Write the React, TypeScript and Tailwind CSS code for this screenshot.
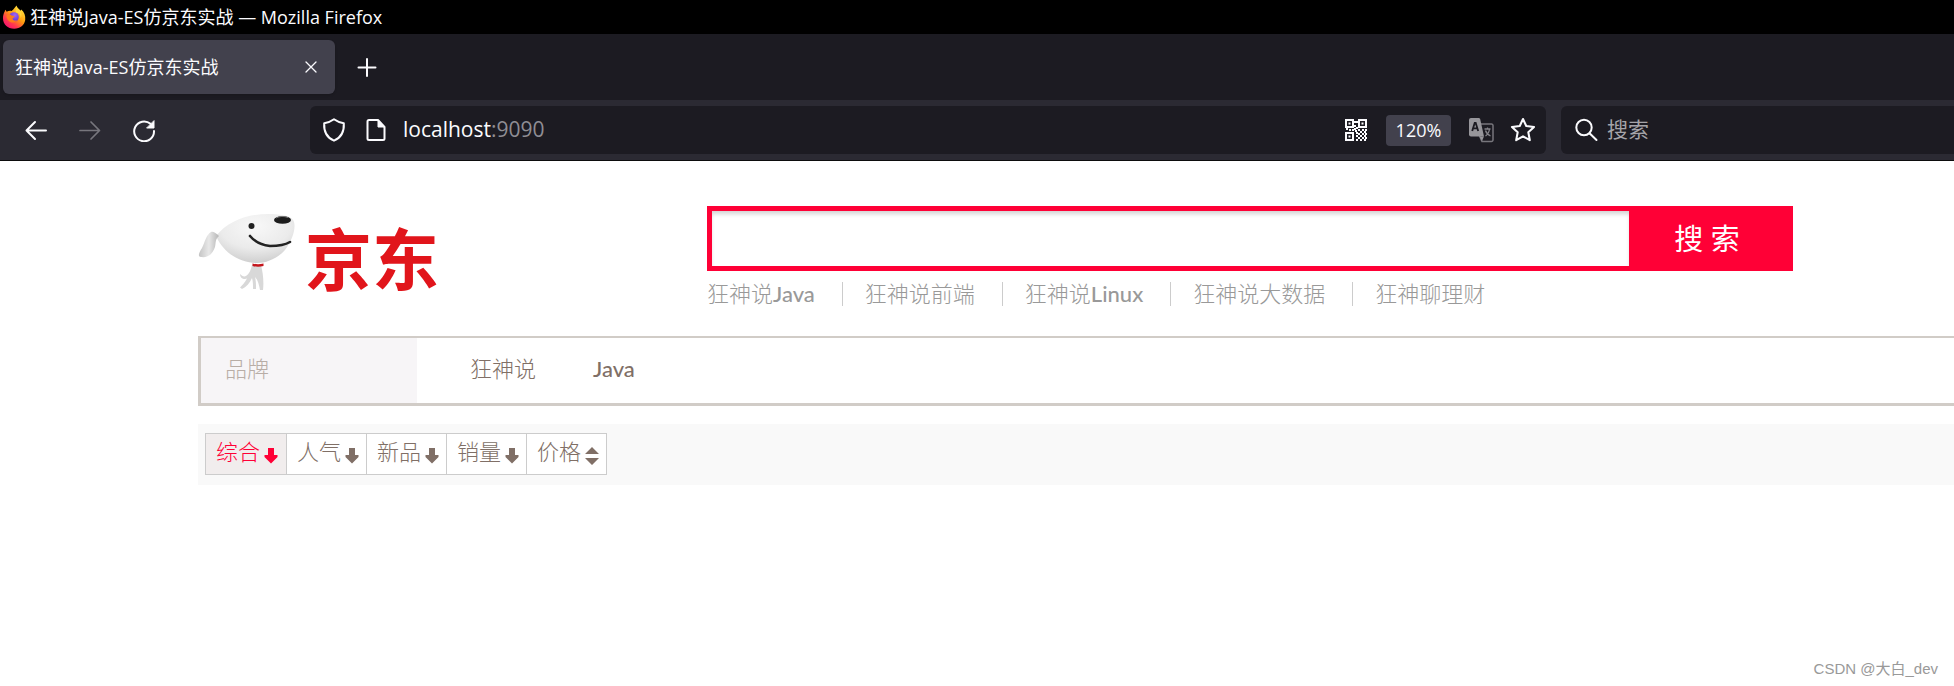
import type { ReactNode } from "react";

const pageLatin = "font-['Lato','Noto_Sans_CJK_SC',sans-serif]";

function FirefoxLogo() {
  return (
    <svg viewBox="0 0 24 24" className="size-6 shrink-0" aria-hidden="true">
      <defs>
        <linearGradient id="flame" x1="0.85" y1="0.1" x2="0.2" y2="0.95">
          <stop offset="0" stopColor="#ffe43d" />
          <stop offset="0.45" stopColor="#ff980e" />
          <stop offset="0.75" stopColor="#ff3750" />
          <stop offset="1" stopColor="#f5156c" />
        </linearGradient>
        <radialGradient id="globe" cx="0.6" cy="0.3" r="0.8">
          <stop offset="0" stopColor="#a067f5" />
          <stop offset="1" stopColor="#592acb" />
        </radialGradient>
      </defs>
      <path d="M2.600 6.800c.2-.9.6-1.600 1-2 .2.900.6 1.400 1.100 1.900 1.500-.9 3.300-1.200 4.800-.8C11.500 5 12.300 3.200 14.500.6c.7 2.400 2.100 3.200 4.100 5.100l.6-1.100c3 2.400 4.500 6 4 10.400-.7 5-5 8.700-11 8.700-6.600 0-11.200-4.600-11.200-10.500 0-2.500.6-4.700 1.600-6.400z" fill="url(#flame)" />
      <circle cx="12" cy="12" r="4.800" fill="url(#globe)" />
      <path d="M4.500 10.500c1.800-1.400 4-1.200 5.500.2 1 .1 2.200 0 2.600.5.100 1-1.500 1.500-2 2-.2 2 2.500 3 4.800 1.800-.8 2-4.500 3.300-7.300 1.900-2.400-1.200-3.700-3.600-3.600-6.400z" fill="#ff7a1c" />
      <path d="M14 7.500c3.500.3 5 3 4.500 5.800 1.300-1.800 1.600-4.300.1-7l-4-4c-.3 1.800-1.300 3.400-.6 5.200z" fill="#ffd43b" />
    </svg>
  );
}

function Icon({ children, className = "size-6", box = "0 0 24 24" }: { children: ReactNode; className?: string; box?: string }) {
  return (
    <svg viewBox={box} className={`shrink-0 ${className}`} fill="none" stroke="currentColor" strokeWidth="2" strokeLinecap="round" strokeLinejoin="round" aria-hidden="true">
      {children}
    </svg>
  );
}

function QrIcon() {
  const cells = [
    [10, 3], [12, 3], [10, 7], [12, 9], [2, 10], [5, 11], [8, 11], [10, 10], [11, 12],
    [14, 11], [18, 11], [21, 11], [12, 14], [16, 13], [20, 13],
    [14, 15], [18, 15], [21, 15], [12, 17], [16, 17], [20, 17],
    [14, 19], [18, 19], [21, 19], [12, 21], [16, 21], [20, 21],
  ];
  return (
    <svg viewBox="0 0 24 24" className="size-6 shrink-0" fill="currentColor" aria-hidden="true">
      <path fillRule="evenodd" d="M1 1h9v9H1zM3 3v5h5V3zM14 1h9v9h-9zM16 3v5h5V3zM1 14h9v9H1zM3 16v5h5v-5z" />
      <path d="M4.500 4.500h2v2h-2zM17.500 4.500h2v2h-2zM4.500 17.500h2v2h-2z" />
      {cells.map(([x, y]) => (
        <rect key={`${x}-${y}`} x={x} y={y} width="2" height="2" />
      ))}
    </svg>
  );
}

function TranslateIcon() {
  return (
    <svg viewBox="0 0 26 28" className="h-7 w-[26px] shrink-0" aria-hidden="true">
      <path d="M13 8h10.500a1.500 1.500 0 0 1 1.500 1.500V24a1.500 1.500 0 0 1-1.500 1.500H14L11.500 20" fill="none" stroke="#77767c" strokeWidth="1.500" />
      <path d="M3 2h7.500c1 0 1.500.5 1.800 1.500L16 20.500H3A2 2 0 0 1 1 18.500V4a2 2 0 0 1 2-2z" fill="#97969b" />
      <path d="M11.500 20.500h4.500l-2 4.500z" fill="#97969b" />
      <path d="M4.200 15 6.700 7h1l2.500 8M5.200 12.300h4" fill="none" stroke="#1c1b22" strokeWidth="1.800" />
      <path d="M16.500 13h6M19.500 11.500V13M17.500 20c2.300-1.500 3.600-3.600 4-7M17.500 14.500c.8 2.500 2.500 4.400 5 5.500" fill="none" stroke="#85848a" strokeWidth="1.300" />
    </svg>
  );
}

function Dog() {
  return (
    <svg viewBox="0 0 100 80" className="h-20 w-[100px] shrink-0" role="img" aria-label="JD">
      <defs>
        <radialGradient id="head" cx="0.5" cy="0.25" r="0.75">
          <stop offset="0" stopColor="#f8f8f8" />
          <stop offset="0.6" stopColor="#ebebeb" />
          <stop offset="1" stopColor="#cfcfcf" />
        </radialGradient>
        <linearGradient id="ear" x1="0" y1="0" x2="1" y2="0">
          <stop offset="0" stopColor="#c4c4c4" />
          <stop offset="0.5" stopColor="#e8e8e8" />
          <stop offset="1" stopColor="#b5b5b5" />
        </linearGradient>
      </defs>
      <path d="M54 53c-1 5-3 9-6 11-2 1-4 0-6-2 0 3 2 5 5 5l2-.5c-2 4-5 7-7 9l2 1.500c4-2 8-6 10-11 1 3 1 7 1 11h3c0-5 0-8-1-12 3 3 4 8 5 13h3c1-8 0-17-2-25z" fill="#d8d8d8" />
      <path d="M18 24C30 9 50 2 70 2c13 0 25 2 26 8 2 7-2 19-9 28-7 8-18 13-28 13-16 0-33-9-41-27z" fill="url(#head)" />
      <path d="M21 24c-3-3-6-5-8-4-5 3-6 10-9 16-4 6-4 9-1 9 8 1 12-4 14-10 1-4 0-8 4-11z" fill="url(#ear)" />
      <ellipse cx="84.500" cy="8" rx="8.500" ry="3.800" fill="#1c1c1c" />
      <path d="M78 6c4-2 8-2 12-.5" stroke="#777" strokeWidth="1" fill="none" />
      <circle cx="53.500" cy="14" r="3" fill="#222" />
      <path d="M52 24c5 6 12 9 20 10 8 0 15-1 20-4" fill="none" stroke="#222" strokeWidth="2.600" strokeLinecap="round" />
      <path d="M54.500 51.500q5.500 1.500 11 0v2.500q-5.500 1.500-11 0z" fill="#c4161c" />
    </svg>
  );
}

function DownArrow() {
  return (
    <svg viewBox="0 0 14 16" className="mt-1 h-4 w-3.5" fill="currentColor" aria-hidden="true">
      <path d="M4 0h6v7h3.500v2L7 15.500.5 9V7H4z" />
    </svg>
  );
}

function SortArrows() {
  return (
    <svg viewBox="0 0 14 18" className="mt-1 h-[18px] w-3.5" fill="currentColor" aria-hidden="true">
      <path d="M7 0l7 7H0zM7 18l7-7H0z" />
    </svg>
  );
}

const hotLinks = [
  ["狂神说", "Java"],
  ["狂神说前端", ""],
  ["狂神说", "Linux"],
  ["狂神说大数据", ""],
  ["狂神聊理财", ""],
];

const sorts = ["综合", "人气", "新品", "销量", "价格"];

function Browser() {
  return (
    <header className="font-['Open_Sans','Noto_Sans_CJK_SC',sans-serif] text-[18px] text-[#fbfbfe]">
      <div className="flex h-[34px] items-center gap-1 bg-black px-0.5">
        <FirefoxLogo />
        <span className="whitespace-nowrap">狂神说Java-ES仿京东实战 — Mozilla Firefox</span>
      </div>
      <div className="flex h-[66px] items-center bg-[#1c1b22] pl-[3px]">
        <div className="flex h-[54px] w-[332px] items-center justify-between rounded-md bg-[#42414d] pr-[18px] pl-3 shadow-sm">
          <span>狂神说Java-ES仿京东实战</span>
          <button aria-label="关闭标签页">
            <Icon className="size-3" box="0 0 12 12"><path d="M1 1l10 10M11 1L1 11" strokeWidth="1.300" /></Icon>
          </button>
        </div>
        <button aria-label="打开新标签页" className="ml-[22px]">
          <Icon className="size-5" box="0 0 20 20"><path d="M10 2v17M1.500 10.500h17" strokeWidth="2" /></Icon>
        </button>
      </div>
      <div className="flex h-[61px] items-center border-b border-[#0c0c0d] bg-[#2b2a33]">
        <div className="flex w-[310px] shrink-0 items-center gap-[30px] pl-6">
          <button aria-label="后退"><Icon><path d="M22 12.500H2.500M11 4L2.500 12.500l8.500 8.500" /></Icon></button>
          <button aria-label="前进" className="text-[#77767d]"><Icon><path d="M2 12.500h19.500M13 4l8.500 8.500-8.500 8.500" strokeWidth="1.700" /></Icon></button>
          <button aria-label="刷新">
            <Icon>
              <path d="M22 13A9.900 9.900 0 1 1 18.500 5.800" />
              <path d="M22 3v7h-7z" fill="currentColor" strokeWidth="1" />
            </Icon>
          </button>
        </div>
        <div className="flex h-12 w-[1236px] shrink-0 items-center rounded-md bg-[#1c1b22] pr-2.5 pl-3">
          <Icon><path d="M12 1.300c3 2.200 6 3.400 9.800 3.900.5 8-2.500 14.300-9.800 17.500C4.700 19.500 1.700 13.200 2.200 5.200 6 4.700 9 3.500 12 1.300z" /></Icon>
          <Icon className="ml-[18px] size-6">
            <path d="M5 2h9l6.500 7v11.500a1.500 1.500 0 0 1-1.500 1.500H5a1.500 1.500 0 0 1-1.500-1.500v-17A1.500 1.500 0 0 1 5 2z" />
            <path d="M14 2.500V9h6z" fill="currentColor" strokeWidth="1" />
          </Icon>
          <a href="#" className="ml-[15px] grow text-[21px]">localhost<span className="text-[#8f8e94]">:9090</span></a>
          <button aria-label="二维码"><QrIcon /></button>
          <button className="ml-[18px] h-[31px] w-[65px] rounded bg-[#42414d] text-[18px]">120%</button>
          <button aria-label="翻译" className="ml-[17px]"><TranslateIcon /></button>
          <button aria-label="收藏" className="ml-4">
            <Icon className="size-[26px]"><path d="M12 1.800l3 6.500 7.200.9-5.300 4.900 1.400 7.300-6.300-3.600-6.300 3.600 1.400-7.300L1.800 9.200 9 8.300z" strokeWidth="1.900" /></Icon>
          </button>
        </div>
        <label className="ml-[15px] flex h-12 min-w-0 grow items-center gap-2 rounded-l-md bg-[#1c1b22] pl-[14px]">
          <Icon><circle cx="9" cy="9.500" r="7.700" /><path d="M14.800 15.500l6.700 6.500" /></Icon>
          <input aria-label="搜索" placeholder="搜索" className="min-w-0 grow bg-transparent text-[21px] outline-none placeholder:text-[#a5a4a9]" />
        </label>
      </div>
    </header>
  );
}

export default function App() {
  return (
    <div className="flex min-h-screen flex-col overflow-hidden bg-white">
      <Browser />
      <main className={`${pageLatin} pl-[198px] text-[22px] leading-[30px] text-[#806f66]`}>
        <div className="flex pt-[45px]">
          <a href="#" className="flex h-[84px] w-[509px] shrink-0 items-start pt-1.5">
            <Dog />
            <span className="mt-3.5 ml-[7px] font-['Noto_Sans_CJK_SC',sans-serif] text-[67px] leading-[60px] font-bold text-[#e1151b]">京东</span>
          </a>
          <div>
            <form className="flex h-[65px] w-[1086px]" onSubmit={(e) => e.preventDefault()}>
              <input aria-label="搜索商品" className="min-w-0 grow border-[5px] border-r-0 border-[#ff0036] px-3 shadow-[inset_0_4px_4px_-1px_#d4d4d4] outline-none" />
              <button className="w-[164px] bg-[#ff0036] pr-2 text-[29px] text-white">搜 索</button>
            </form>
            <ul className="mt-2 flex text-[#999]">
              {hotLinks.map(([han, latin], i) => (
                <li key={i} className="flex items-center whitespace-nowrap">
                  {i > 0 && <span className="mr-[22px] ml-[27px] h-6 w-px bg-[#ccc]" />}
                  <a href="#"><span className="font-light">{han}</span><span className="font-medium">{latin}</span></a>
                </li>
              ))}
            </ul>
          </div>
        </div>
        <div className="mt-[27px] flex h-[70px] items-stretch border-t-2 border-b-[3px] border-l-[3px] border-[#d1ccc7]">
          <div className="flex w-[216px] items-center bg-[#f7f5f7] pb-1 pl-6 font-light text-[#b8ada6]">品牌</div>
          <a href="#" className="ml-[53px] flex items-center pb-1 font-light">狂神说</a>
          <a href="#" className="ml-[57px] flex items-center pb-1 font-medium">Java</a>
        </div>
        <div className="mt-[18px] bg-[#f9f9f9] pt-[9px] pb-2.5 pl-[7px]">
          <div className="flex h-[42px] w-fit border border-[#ccc]">
            {sorts.map((name, i) => (
              <button
                key={name}
                className={`flex items-center gap-1 pl-2.5 font-light ${i > 0 ? "w-20 border-l border-[#ccc] bg-white" : "w-20 bg-[#f1eded] text-[#ff0036]"}`}
              >
                <span className="pb-1">{name}</span>
                {i < 4 ? <DownArrow /> : <SortArrows />}
              </button>
            ))}
          </div>
        </div>
      </main>
      <footer className="mt-auto pr-4 pb-1.5 text-right font-['Liberation_Sans','Noto_Sans_CJK_SC',sans-serif] text-[15px] text-[#999]">
        CSDN @大白_dev
      </footer>
    </div>
  );
}
